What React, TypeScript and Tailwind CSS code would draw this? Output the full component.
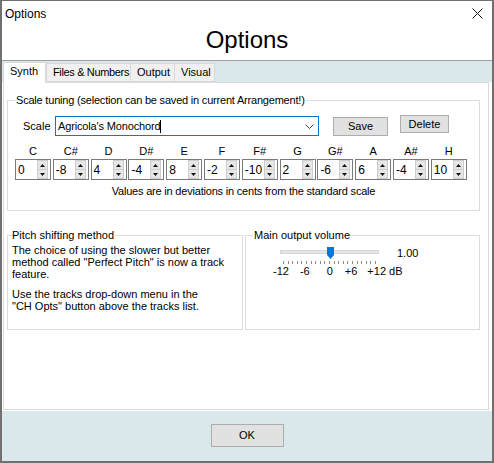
import React from "react";

const notes: [string, string][] = [
  ["C", "0"],
  ["C#", "-8"],
  ["D", "4"],
  ["D#", "-4"],
  ["E", "8"],
  ["F", "-2"],
  ["F#", "-10"],
  ["G", "2"],
  ["G#", "-6"],
  ["A", "6"],
  ["A#", "-4"],
  ["H", "10"],
];

const ticks = Array.from({ length: 21 }, (_, i) => i);

function SpinBox({ value }: { value: string }) {
  return (
    <div className="flex h-[21px] w-[36px] items-center border border-[#7a7a7a] bg-white">
      <span className="flex-1 pl-[2px] text-[12px] leading-none">{value}</span>
      <div className="mr-[2px] flex h-[19px] w-[11px] flex-col border border-[#cdcdcd] bg-[#e6e6e6]">
        <div className="flex flex-1 items-center justify-center border-b border-[#cdcdcd]">
          <svg width="5" height="3" viewBox="0 0 5 3">
            <path d="M2.5 0L5 3H0Z" fill="#111" />
          </svg>
        </div>
        <div className="flex flex-1 items-center justify-center">
          <svg width="5" height="3" viewBox="0 0 5 3">
            <path d="M0 0H5L2.5 3Z" fill="#111" />
          </svg>
        </div>
      </div>
    </div>
  );
}

export default function App() {
  return (
    <div className="flex h-[463px] w-[494px] flex-col border-x-2 border-t border-b-2 border-[#707070] bg-white font-['Liberation_Sans',Arial,sans-serif] text-[11px] text-black">
      {/* title bar */}
      <div className="flex h-[25px] items-center justify-between">
        <span className="pl-[3px] text-[12px]">Options</span>
        <svg width="11" height="11" viewBox="0 0 11 11" className="mr-[9px]">
          <path d="M0.5 0.5L10.5 10.5M10.5 0.5L0.5 10.5" stroke="#111" strokeWidth="1" />
        </svg>
      </div>

      {/* header */}
      <div className="h-[35px] border-b border-[#a0a0a0] text-center text-[24px] leading-[27px]">Options</div>

      {/* tabs */}
      <div className="flex h-[21px] items-end bg-[#dae8ec] pl-[1px]">
        <div className="relative z-10 -mb-px h-[21px] w-[43px] border border-b-0 border-[#d9d9d9] bg-white pl-[6px] pt-[2px] leading-[13px]">
          Synth
        </div>
        <div className="h-[19px] w-[85px] border border-[#d9d9d9] bg-[#f0f0f0] pl-[6px] leading-[16px] tracking-[-0.35px]">
          Files &amp; Numbers
        </div>
        <div className="h-[19px] w-[44px] border border-l-0 border-[#d9d9d9] bg-[#f0f0f0] pl-[6px] leading-[16px]">
          Output
        </div>
        <div className="h-[19px] w-[40px] border border-l-0 border-[#d9d9d9] bg-[#f0f0f0] pl-[6px] leading-[16px]">
          Visual
        </div>
      </div>

      {/* panel */}
      <div className="ml-[1px] mr-[3px] h-[328px] border border-[#d9d9d9] bg-white">
        <fieldset className="ml-[3px] mt-[11px] h-[117px] w-[473px] border border-[#dcdcdc]">
          <legend className="ml-[7px] px-[1px] leading-[13px] tracking-[-0.2px]">
            Scale tuning (selection can be saved in current Arrangement!)
          </legend>

          <div className="mt-[9px] flex items-start">
            <span className="ml-[15px] w-[32px] leading-[20px]">Scale</span>
            <div className="flex h-[20px] w-[264px] items-center border border-[#0078d7] pl-[2px]">
              <span className="tracking-[-0.15px]">Agricola's Monochord</span>
              <span className="h-[13px] w-[1px] bg-black" />
              <span className="flex-1" />
              <svg width="9" height="5" viewBox="0 0 9 5" className="mr-[4px]">
                <polyline points="0.5,0.5 4.5,4.5 8.5,0.5" fill="none" stroke="#444" strokeWidth="1" />
              </svg>
            </div>
            <button className="ml-[14px] mt-[1px] h-[19px] w-[55px] border border-[#adadad] bg-[#e1e1e1] leading-[17px]">
              Save
            </button>
            <button className="-mt-[1px] ml-[12px] h-[18px] w-[49px] border border-[#adadad] bg-[#e1e1e1] leading-[16px]">
              Delete
            </button>
          </div>

          <div className="ml-[7px] mt-[9px] flex gap-[1.8px]">
            {notes.map(([n, v]) => (
              <div key={n} className="flex w-[36px] flex-col">
                <span className="h-[13px] text-center leading-[13px]">{n}</span>
                <div className="mt-[1px]">
                  <SpinBox value={v} />
                </div>
              </div>
            ))}
          </div>

          <p className="mt-[5px] text-center leading-[13px] tracking-[-0.2px]">
            Values are in deviations in cents from the standard scale
          </p>
        </fieldset>

        <div className="ml-[3px] mt-[18px] flex gap-[2px]">
          <fieldset className="h-[101px] w-[236px] border border-[#dcdcdc]">
            <legend className="ml-[4px] pr-[1px] leading-[13px]">Pitch shifting method</legend>
            <div className="mt-[2px] whitespace-nowrap pl-[4px] leading-[12px]">
              <p>
                The choice of using the slower but better
                <br />
                method called "Perfect Pitch" is now a track
                <br />
                feature.
              </p>
              <p className="mt-[8px]">
                Use the tracks drop-down menu in the
                <br />
                "CH Opts" button above the tracks list.
              </p>
            </div>
          </fieldset>

          <fieldset className="h-[101px] w-[235px] border border-[#dcdcdc]">
            <legend className="ml-[7px] px-[1px] leading-[13px]">Main output volume</legend>
            <div className="mt-[5px] flex items-start">
              <div className="ml-[34px] w-[99px]">
                <div className="relative h-[12px]">
                  <div className="absolute inset-x-0 top-[3px] h-[4px] border border-[#d6d6d6] bg-[#e7e7e7]" />
                  <svg width="7" height="12" viewBox="0 0 7 12" className="absolute left-[47px] top-0">
                    <path d="M0 0H7V8L3.5 12L0 8Z" fill="#0078d7" />
                  </svg>
                </div>
                <div className="mt-[2px] flex justify-between px-[3px]">
                  {ticks.map((t) => (
                    <span key={t} className="h-[3px] w-[1px] bg-[#8c8c8c]" />
                  ))}
                </div>
              </div>
              <span className="ml-[18px] leading-[13px]">1.00</span>
            </div>
            <div className="ml-[27px] mt-[1px] flex leading-[13px]">
              <span>-12</span>
              <span className="ml-[11px]">-6</span>
              <span className="ml-[17px]">0</span>
              <span className="ml-[12px]">+6</span>
              <span className="ml-[10px]">+12 dB</span>
            </div>
          </fieldset>
        </div>
      </div>

      <div className="h-[1px]" />

      {/* footer */}
      <div className="h-[50px] bg-[#dae8ec] pt-[13px]">
        <button className="mx-auto block h-[23px] w-[73px] border border-[#adadad] bg-[#e1e1e1] leading-[21px]">
          OK
        </button>
      </div>
    </div>
  );
}
